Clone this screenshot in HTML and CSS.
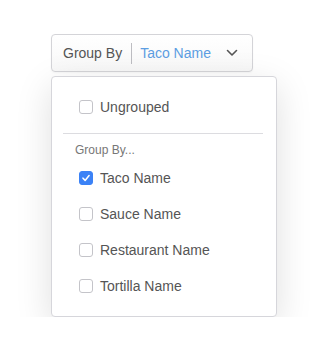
FILE: index.html
```html
<!DOCTYPE html>
<html>
<head>
<meta charset="utf-8">
<link rel="stylesheet" href="styles.css">
</head>
<body>
<div class="wrap">
  <button class="trigger">
    <span class="trigger-label">Group By</span>
    <span class="sep"></span>
    <span class="trigger-value">Taco Name</span>
    <svg class="chev" width="12" height="8" viewBox="0 0 12 8"><path d="M1.5 1.5 L6 6 L10.5 1.5" fill="none" stroke="#555" stroke-width="1.6" stroke-linecap="round" stroke-linejoin="round"/></svg>
  </button>
  <div class="menu">
    <div class="item"><span class="box"></span><span>Ungrouped</span></div>
    <div class="divider"></div>
    <div class="heading">Group By...</div>
    <div class="item"><span class="box checked"><svg width="14" height="14" viewBox="0 0 14 14"><path d="M3.5 7.2 L6 9.8 L10.6 4.2" fill="none" stroke="#fff" stroke-width="1.8" stroke-linecap="round" stroke-linejoin="round"/></svg></span><span>Taco Name</span></div>
    <div class="item"><span class="box"></span><span>Sauce Name</span></div>
    <div class="item"><span class="box"></span><span>Restaurant Name</span></div>
    <div class="item"><span class="box"></span><span>Tortilla Name</span></div>
  </div>
</div>
</body>
</html>
```
FILE: styles.css
```css
html, body {
  margin: 0;
  padding: 0;
  background: #fff;
  font-family: "Liberation Sans", Arial, sans-serif;
}
.wrap {
  padding: 34px 0 0 51px;
  display: flex;
  flex-direction: column;
  align-items: flex-start;
}
.trigger {
  box-sizing: border-box;
  height: 38px;
  width: 202px;
  display: flex;
  align-items: center;
  padding: 0 0 0 11px;
  border: 1px solid #d4d4d8;
  border-radius: 4px;
  background: linear-gradient(#ffffff, #f8f8f8);
  box-shadow: 0 1px 2px rgba(0,0,0,0.04);
  font-family: inherit;
  font-size: 14px;
  color: #555;
}
.trigger-label { color: #555; }
.sep {
  width: 1px;
  height: 21px;
  background: #bdbdc2;
  margin: 0 8px 0 9px;
}
.trigger-value { color: #5d9ee2; }
.chev { margin-left: 15px; }
.menu {
  box-sizing: border-box;
  margin-top: 4px;
  width: 226px;
  height: 241px;
  border: 1px solid #d6d6db;
  border-radius: 4px;
  background: #fff;
  padding: 12px 0 10px;
  box-shadow: 0 10px 36px rgba(0,0,0,0.13);
}
.item {
  height: 36px;
  display: flex;
  align-items: center;
  padding-left: 27px;
  font-size: 14px;
  color: #555;
}
.box {
  box-sizing: border-box;
  width: 14px;
  height: 14px;
  border: 1px solid #c4c4c9;
  border-radius: 3px;
  margin-right: 7px;
  display: flex;
  align-items: center;
  justify-content: center;
  background: #fff;
}
.box.checked {
  background: #3b82f6;
  border-color: #3b82f6;
}
.box.checked svg { display: block; }
.divider {
  height: 1px;
  background: #dcdce0;
  margin: 8px 13px 0 11px;
}
.heading {
  font-size: 12px;
  color: #777;
  line-height: 16px;
  padding-left: 23px;
  margin: 8px 0 2px;
}
```
